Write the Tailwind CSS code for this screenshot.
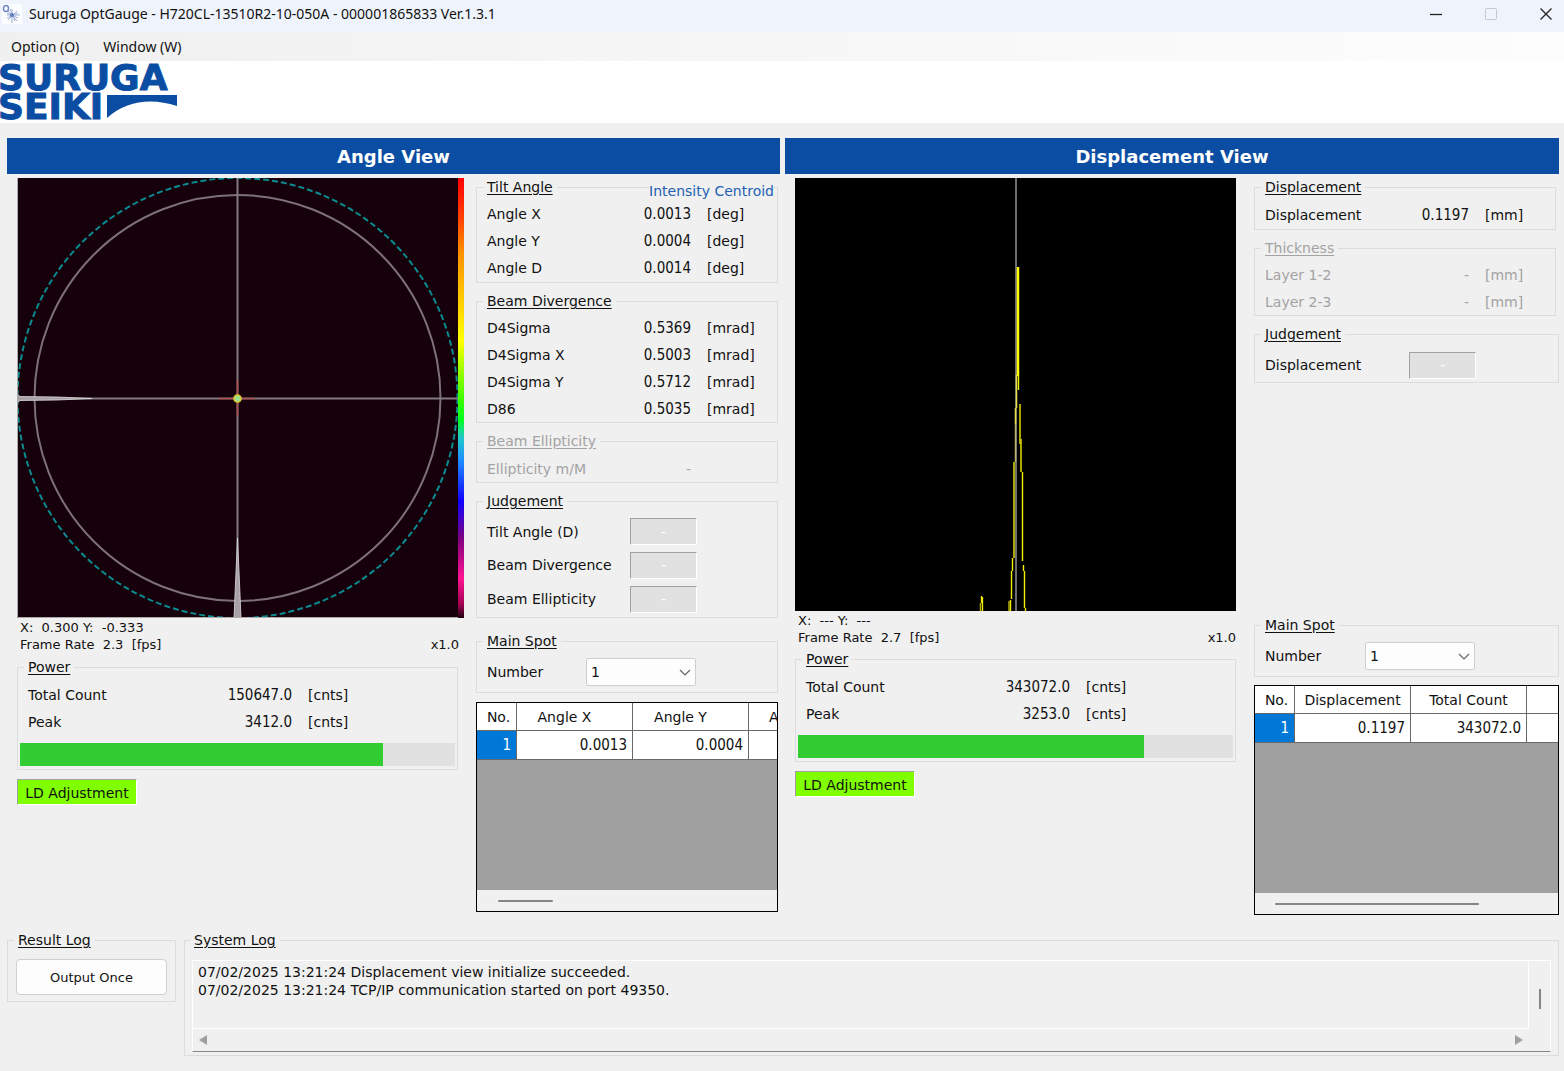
<!DOCTYPE html>
<html lang="en">
<head>
<meta charset="utf-8">
<meta name="viewport" content="width=device-width, initial-scale=1">
<title>Suruga OptGauge</title>
<script src="https://cdn.jsdelivr.net/npm/@tailwindcss/browser@4"></script>
</head>
<body class="flex min-h-screen flex-col bg-[#f0f0f0] font-['DejaVu_Sans',sans-serif] text-[14px] leading-5 text-[#111]">

<header>
  <!-- Title bar -->
  <div class="flex h-8 items-center bg-[#eff3fb] pb-1 pl-[2px] font-['Noto_Sans',sans-serif] text-sm">
    <svg class="mr-[7px] size-5 shrink-0" viewBox="0 0 20 20" fill="none">
      <rect width="20" height="20" fill="#fcfdff"/>
      <g stroke="#9fb0d8" stroke-width="1">
        <path d="M5 11H18M10 5V19M6 7L15 17M6 16L15 7M8 5L13 17M5 9L16 14M5 14L16 9"/>
      </g>
      <circle cx="10" cy="11" r="2" fill="#5f7cc0"/>
      <ellipse cx="4" cy="4.500" rx="2.500" ry="3" fill="#fcfdff" stroke="#6f88c6" stroke-width="1.500"/>
    </svg>
    <h1 class="grow">Suruga OptGauge - H720CL-13510R2-10-050A - 000001865833 Ver.1.3.1</h1>
    <div class="flex gap-[19px]">
      <button aria-label="Minimize" class="flex h-7 w-9 items-center justify-center"><svg class="size-3" viewBox="0 0 12 12"><path d="M0 6.500H12" stroke="#222" stroke-width="1.300"/></svg></button>
      <button aria-label="Maximize" disabled class="flex h-7 w-9 items-center justify-center"><svg class="size-3" viewBox="0 0 12 12"><rect x=".5" y=".5" width="11" height="11" rx="1" fill="none" stroke="#c4c7cd"/></svg></button>
      <button aria-label="Close" class="flex h-7 w-9 items-center justify-center"><svg class="size-3" viewBox="0 0 12 12"><path d="M.5.5L11.500 11.500M11.500.5L.5 11.500" stroke="#222" stroke-width="1.300"/></svg></button>
    </div>
  </div>
  <!-- Menu bar -->
  <nav class="flex h-[29px] items-center gap-6 bg-linear-to-r from-[#f0f0f0] to-[#fdfdfd] pl-[11px] font-['Noto_Sans',sans-serif] text-sm">
    <button>Option (O)</button>
    <button>Window (W)</button>
  </nav>
  <!-- Brand band -->
  <div class="h-[62px] bg-white">
    <svg class="block h-[62px] w-[190px]" viewBox="0 0 190 62" role="img" aria-label="Suruga Seiki">
      <g fill="#0b4da2" stroke="#0b4da2" stroke-width="1" font-family="DejaVu Sans" font-weight="bold" font-size="36">
        <text x="-2" y="29">SURUGA</text>
        <text x="-2" y="58">SEIKI</text>
      </g>
      <path fill="#0b4da2" d="M107 34H177V45C152 37 127 39 107 57Z"/>
    </svg>
  </div>
</header>

<main class="grid grid-cols-[773fr_774fr] gap-x-[5px] pt-[15px] pr-[5px] pl-[7px]">

  <!-- Angle view -->
  <section class="flex flex-col">
    <h2 class="bg-[#0b4da2] pt-px text-center text-[18px] leading-[35px] font-bold text-white">Angle View</h2>
    <div class="flex grow gap-3 pt-[3px] pr-[2px] pl-[10px]">
      <div class="min-w-0 flex-1 pt-px">
        <svg class="block w-full" viewBox="0 0 447 440" fill="none">
          <defs>
            <linearGradient id="scale" x1="0" y1="0" x2="0" y2="1">
              <stop offset="0" stop-color="#f00"/><stop offset=".09" stop-color="#ff4000"/><stop offset=".17" stop-color="#ff9000"/>
              <stop offset=".37" stop-color="#ff0"/><stop offset=".5" stop-color="#40ff00"/><stop offset=".55" stop-color="#00ff20"/>
              <stop offset=".59" stop-color="#20c8c8"/><stop offset=".64" stop-color="#1e90ff"/><stop offset=".735" stop-color="#10f"/>
              <stop offset=".82" stop-color="#800080"/><stop offset=".91" stop-color="#ff1493"/><stop offset=".97" stop-color="#a00050"/><stop offset="1" stop-color="#200010"/>
            </linearGradient>
          </defs>
          <rect width="447" height="440" fill="#16000b"/>
          <circle cx="220.500" cy="220" r="220" stroke="#0b8a90" stroke-width="2" stroke-dasharray="6 3"/>
          <circle cx="220.500" cy="220" r="203" stroke="#7c7177" stroke-width="2"/>
          <path d="M220.500 0V440M0 220.500H441" stroke="#817a7e" stroke-width="2"/>
          <path d="M202 220.500H238M220.500 202V238" stroke="#b0504f" stroke-width="1.500"/>
          <path d="M0 216L3 218.500L40 219L75 220.500L40 222L3 222.500L0 225Z" fill="#a8a0a4" stroke="#ddd" stroke-width=".8"/>
          <path d="M217 440L218.500 405L220.500 360L222.500 405L224 440Z" fill="#a8a0a4" stroke="#ddd" stroke-width=".8"/>
          <circle cx="220.500" cy="220.500" r="3.600" fill="#9be38a" stroke="#e0c832" stroke-width="1.500"/>
          <rect x="441" width="6" height="440" fill="url(#scale)"/>
          <path d="M.5 0V439.500H441" stroke="#aaa" stroke-width="1"/>
        </svg>
        <div class="mt-px flex items-end justify-between pr-[5px] pl-[3px] text-[13px] leading-[17px]">
          <p>X:&nbsp; 0.300 Y:&nbsp; -0.333<br>Frame Rate&nbsp; 2.3&nbsp; [fps]</p>
          <p>x1.0</p>
        </div>
        <fieldset class="mt-1 mr-[6px] border border-[#dcdcdc] px-[2px] pb-[3px]">
          <legend class="ml-1 px-1 underline underline-offset-2">Power</legend>
          <div class="mt-[5px] grid h-[53px] auto-rows-fr grid-cols-[144px_120px_1fr] items-center pl-2">
            <span>Total Count</span><span class="text-right font-['DejaVu_Sans_Condensed'] text-[15px]">150647.0</span><span class="pl-4">[cnts]</span>
            <span>Peak</span><span class="text-right font-['DejaVu_Sans_Condensed'] text-[15px]">3412.0</span><span class="pl-4">[cnts]</span>
          </div>
          <div role="progressbar" aria-label="Power" aria-valuenow="84" class="mt-2 h-[23px] bg-[#e1e1e1]"><div class="h-full bg-[#32cd32]" style="width:83.5%"></div></div>
        </fieldset>
        <button class="mt-[9px] block h-[26px] w-[120px] border border-t-[#a0a0a0] border-r-white border-b-white border-l-[#a0a0a0] bg-[#80ff00] pt-px whitespace-nowrap">LD Adjustment</button>
      </div>

      <div class="flex w-[302px] shrink-0 flex-col">
        <fieldset class="relative border border-[#dcdcdc] px-[10px] pb-px">
          <legend class="-ml-1 px-1 underline underline-offset-2">Tilt Angle</legend>
          <span class="absolute top-[-16px] right-[3px] bg-[#f0f0f0] text-[#1f5fb4]">Intensity Centroid</span>
          <div class="mt-1 grid h-20 auto-rows-fr grid-cols-[120px_84px_1fr] items-center">
            <span>Angle X</span><span class="text-right font-['DejaVu_Sans_Condensed'] text-[15px]">0.0013</span><span class="pl-4">[deg]</span>
            <span>Angle Y</span><span class="text-right font-['DejaVu_Sans_Condensed'] text-[15px]">0.0004</span><span class="pl-4">[deg]</span>
            <span>Angle D</span><span class="text-right font-['DejaVu_Sans_Condensed'] text-[15px]">0.0014</span><span class="pl-4">[deg]</span>
          </div>
        </fieldset>
        <fieldset class="mt-2 border border-[#dcdcdc] px-[10px]">
          <legend class="-ml-1 px-1 underline underline-offset-2">Beam Divergence</legend>
          <div class="mt-1 grid h-[107px] auto-rows-fr grid-cols-[120px_84px_1fr] items-center">
            <span>D4Sigma</span><span class="text-right font-['DejaVu_Sans_Condensed'] text-[15px]">0.5369</span><span class="pl-4">[mrad]</span>
            <span>D4Sigma X</span><span class="text-right font-['DejaVu_Sans_Condensed'] text-[15px]">0.5003</span><span class="pl-4">[mrad]</span>
            <span>D4Sigma Y</span><span class="text-right font-['DejaVu_Sans_Condensed'] text-[15px]">0.5712</span><span class="pl-4">[mrad]</span>
            <span>D86</span><span class="text-right font-['DejaVu_Sans_Condensed'] text-[15px]">0.5035</span><span class="pl-4">[mrad]</span>
          </div>
        </fieldset>
        <fieldset disabled class="mt-2 border border-[#dcdcdc] px-[10px] text-[#a3a3a3]">
          <legend class="-ml-1 px-1 underline underline-offset-2">Beam Ellipticity</legend>
          <div class="mt-1 grid h-[27px] grid-cols-[120px_84px_1fr] items-center">
            <span>Ellipticity m/M</span><span class="text-right">-</span>
          </div>
        </fieldset>
        <fieldset class="mt-2 border border-[#dcdcdc] px-[10px] pb-px">
          <legend class="-ml-1 px-1 underline underline-offset-2">Judgement</legend>
          <div class="mt-1 grid h-[101px] auto-rows-fr grid-cols-[143px_67px] items-center">
            <label for="j1">Tilt Angle (D)</label><output id="j1" class="flex h-[27px] items-center justify-center border border-t-[#a0a0a0] border-r-white border-b-white border-l-[#a0a0a0] bg-[#e1e1e1] text-white">-</output>
            <label for="j2">Beam Divergence</label><output id="j2" class="flex h-[27px] items-center justify-center border border-t-[#a0a0a0] border-r-white border-b-white border-l-[#a0a0a0] bg-[#e1e1e1] text-white">-</output>
            <label for="j3">Beam Ellipticity</label><output id="j3" class="flex h-[27px] items-center justify-center border border-t-[#a0a0a0] border-r-white border-b-white border-l-[#a0a0a0] bg-[#e1e1e1] text-white">-</output>
          </div>
        </fieldset>
        <fieldset class="mt-[13px] border border-[#dcdcdc] px-[10px]">
          <legend class="-ml-1 px-1 underline underline-offset-2">Main Spot</legend>
          <div class="grid h-[41px] grid-cols-[99px_110px] items-center">
            <label for="spotA">Number</label>
            <div class="relative">
              <select id="spotA" class="block h-7 w-full appearance-none rounded-xs border border-[#cfcfcf] bg-[#fdfdfd] pl-1"><option>1</option></select>
              <svg class="pointer-events-none absolute top-[11px] right-[5px] h-[7px] w-3" viewBox="0 0 12 7"><path d="M1 1L6 6L11 1" fill="none" stroke="#666" stroke-width="1.200"/></svg>
            </div>
          </div>
        </fieldset>
        <div class="mt-[9px] flex h-[210px] flex-col overflow-hidden border border-black bg-[#a0a0a0]">
          <table class="w-[388px] table-fixed border-separate border-spacing-0">
            <colgroup><col class="w-10"><col class="w-[116px]"><col class="w-[116px]"><col class="w-[116px]"></colgroup>
            <thead class="bg-white">
              <tr class="h-7">
                <th class="border-r border-b border-[#696969] pl-1 font-normal">No.</th>
                <th class="border-r border-b border-[#696969] pr-5 font-normal">Angle X</th>
                <th class="border-r border-b border-[#696969] pr-5 font-normal">Angle Y</th>
                <th class="border-r border-b border-[#696969] pr-5 font-normal">Angle D</th>
              </tr>
            </thead>
            <tbody class="bg-white text-right font-['DejaVu_Sans_Condensed'] text-[15px]">
              <tr class="h-[29px]">
                <td class="border-r border-b border-[#696969] bg-[#0078d7] pr-[5px] text-white">1</td>
                <td class="border-r border-b border-[#696969] pr-[5px]">0.0013</td>
                <td class="border-r border-b border-[#696969] pr-[5px]">0.0004</td>
                <td class="border-r border-b border-[#696969] pr-[5px]"></td>
              </tr>
            </tbody>
          </table>
          <div class="mt-auto flex h-[21px] items-center bg-[#f0f0f0] pl-[21px]"><div class="h-[2px] w-[55px] rounded-full bg-[#868686]"></div></div>
        </div>
      </div>
    </div>
  </section>

  <!-- Displacement view -->
  <section class="flex flex-col">
    <h2 class="bg-[#0b4da2] pt-px text-center text-[18px] leading-[35px] font-bold text-white">Displacement View</h2>
    <div class="flex grow gap-[18px] pt-[3px] pl-[10px]">
      <div class="min-w-0 flex-1 pt-px">
        <svg class="block w-full" viewBox="0 0 441 433" fill="none">
          <rect width="441" height="433" fill="#000"/>
          <path d="M221 0V433" stroke="#6e6e6e" stroke-width="2"/>
          <path d="M221.500 197V230M220.500 230V246" stroke="#e8e04a" stroke-width="1.500"/>
          <path d="M220.500 246V284" stroke="#b9b466" stroke-width="1.500"/>
          <path d="M223 89V198" stroke="#ff0" stroke-width="2.500"/>
          <path d="M219 284V380M225 226V266M226 261V294" stroke="#c8c400" stroke-width="1.700"/>
          <path d="M223.500 198V212M227.500 294V383M228.500 387V393M229.500 393V430M230.500 430V433M217.500 380V393M216.500 393V421M215.500 422V433" stroke="#f2ee00" stroke-width="1.400"/>
          <path d="M214 423V433M185.500 425V433" stroke="#b0ac00" stroke-width="1.500"/>
          <path d="M186.500 418V425M187.500 419V433" stroke="#f2ee00" stroke-width="1.300"/>
        </svg>
        <div class="mt-px flex items-end justify-between pl-[3px] text-[13px] leading-[17px]">
          <p>X:&nbsp; --- Y:&nbsp; ---<br>Frame Rate&nbsp; 2.7&nbsp; [fps]</p>
          <p>x1.0</p>
        </div>
        <fieldset class="mt-[3px] border border-[#dcdcdc] px-[2px] pb-[3px]">
          <legend class="ml-1 px-1 underline underline-offset-2">Power</legend>
          <div class="mt-[5px] grid h-[53px] auto-rows-fr grid-cols-[144px_120px_1fr] items-center pl-2">
            <span>Total Count</span><span class="text-right font-['DejaVu_Sans_Condensed'] text-[15px]">343072.0</span><span class="pl-4">[cnts]</span>
            <span>Peak</span><span class="text-right font-['DejaVu_Sans_Condensed'] text-[15px]">3253.0</span><span class="pl-4">[cnts]</span>
          </div>
          <div role="progressbar" aria-label="Power" aria-valuenow="80" class="mt-2 h-[23px] bg-[#e1e1e1]"><div class="h-full bg-[#32cd32]" style="width:79.5%"></div></div>
        </fieldset>
        <button class="mt-[9px] block h-[26px] w-[120px] border border-t-[#a0a0a0] border-r-white border-b-white border-l-[#a0a0a0] bg-[#80ff00] pt-px whitespace-nowrap">LD Adjustment</button>
      </div>

      <div class="flex w-[305px] shrink-0 flex-col">
        <fieldset class="mr-[3px] border border-[#dcdcdc] px-[10px] pb-px">
          <legend class="-ml-1 px-1 underline underline-offset-2">Displacement</legend>
          <div class="mt-1 grid h-[27px] grid-cols-[120px_84px_1fr] items-center">
            <span>Displacement</span><span class="text-right font-['DejaVu_Sans_Condensed'] text-[15px]">0.1197</span><span class="pl-4">[mm]</span>
          </div>
        </fieldset>
        <fieldset disabled class="mt-2 mr-[3px] border border-[#dcdcdc] px-[10px] text-[#a3a3a3]">
          <legend class="-ml-1 px-1 underline underline-offset-2">Thickness</legend>
          <div class="mt-1 grid h-[53px] auto-rows-fr grid-cols-[120px_84px_1fr] items-center">
            <span>Layer 1-2</span><span class="text-right">-</span><span class="pl-4">[mm]</span>
            <span>Layer 2-3</span><span class="text-right">-</span><span class="pl-4">[mm]</span>
          </div>
        </fieldset>
        <fieldset class="mt-2 border border-[#dcdcdc] px-[10px]">
          <legend class="-ml-1 px-1 underline underline-offset-2">Judgement</legend>
          <div class="mt-1 grid h-[34px] grid-cols-[144px_67px] items-center">
            <label for="j4">Displacement</label><output id="j4" class="flex h-[27px] items-center justify-center border border-t-[#a0a0a0] border-r-white border-b-white border-l-[#a0a0a0] bg-[#e1e1e1] text-white">-</output>
          </div>
        </fieldset>
        <fieldset class="mt-[232px] border border-[#dcdcdc] px-[10px]">
          <legend class="-ml-1 px-1 underline underline-offset-2">Main Spot</legend>
          <div class="grid h-[41px] grid-cols-[100px_110px] items-center">
            <label for="spotD">Number</label>
            <div class="relative">
              <select id="spotD" class="block h-7 w-full appearance-none rounded-xs border border-[#cfcfcf] bg-[#fdfdfd] pl-1"><option>1</option></select>
              <svg class="pointer-events-none absolute top-[11px] right-[5px] h-[7px] w-3" viewBox="0 0 12 7"><path d="M1 1L6 6L11 1" fill="none" stroke="#666" stroke-width="1.200"/></svg>
            </div>
          </div>
        </fieldset>
        <div class="mt-2 flex h-[230px] flex-col overflow-hidden border border-black bg-[#a0a0a0]">
          <table class="w-[388px] table-fixed border-separate border-spacing-0">
            <colgroup><col class="w-10"><col class="w-[116px]"><col class="w-[116px]"><col class="w-[116px]"></colgroup>
            <thead class="bg-white">
              <tr class="h-7">
                <th class="border-r border-b border-[#696969] pl-1 font-normal">No.</th>
                <th class="border-r border-b border-[#696969] font-normal">Displacement</th>
                <th class="border-r border-b border-[#696969] font-normal">Total Count</th>
                <th class="border-r border-b border-[#696969] pr-4 font-normal">Peak</th>
              </tr>
            </thead>
            <tbody class="bg-white text-right font-['DejaVu_Sans_Condensed'] text-[15px]">
              <tr class="h-[29px]">
                <td class="border-r border-b border-[#696969] bg-[#0078d7] pr-[5px] text-white">1</td>
                <td class="border-r border-b border-[#696969] pr-[5px]">0.1197</td>
                <td class="border-r border-b border-[#696969] pr-[5px]">343072.0</td>
                <td class="border-r border-b border-[#696969]"></td>
              </tr>
            </tbody>
          </table>
          <div class="mt-auto flex h-[21px] items-center bg-[#f0f0f0] pl-5"><div class="h-[2px] w-[204px] rounded-full bg-[#868686]"></div></div>
        </div>
      </div>
    </div>
  </section>
</main>

<!-- Logs -->
<footer class="flex items-start gap-2 pt-[15px] pr-[5px] pl-[7px]">
  <fieldset class="w-[169px] shrink-0 border border-[#dcdcdc] px-2 pb-[6px]">
    <legend class="-ml-[2px] px-1 underline underline-offset-2">Result Log</legend>
    <button class="mt-[9px] block h-9 w-full rounded border border-[#d0d0d0] bg-[#fdfdfd] pt-px text-[13px]">Output Once</button>
  </fieldset>
  <fieldset class="min-w-0 grow border border-[#dcdcdc] px-[7px] pb-[3px]">
    <legend class="-ml-[2px] px-1 underline underline-offset-2">System Log</legend>
    <div class="mt-[10px] grid h-[92px] grid-cols-[1fr_21px] grid-rows-[1fr_22px] border border-t-white border-r-white border-b-[#868686] border-l-white">
      <textarea readonly aria-label="System Log" class="block resize-none overflow-hidden border-r border-b border-white pt-[2px] pl-[5px] leading-[18px] outline-none">07/02/2025 13:21:24 Displacement view initialize succeeded.
07/02/2025 13:21:24 TCP/IP communication started on port 49350.</textarea>
      <div class="flex items-center justify-center pt-2"><div class="h-5 w-[2px] bg-[#868686]"></div></div>
      <div class="flex items-center justify-between px-[6px]">
        <svg class="h-[10px] w-2" viewBox="0 0 8 10"><path d="M8 0V10L0 5Z" fill="#a0a0a0"/></svg>
        <svg class="h-[10px] w-2" viewBox="0 0 8 10"><path d="M0 0V10L8 5Z" fill="#a0a0a0"/></svg>
      </div>
    </div>
  </fieldset>
</footer>
</body>
</html>
